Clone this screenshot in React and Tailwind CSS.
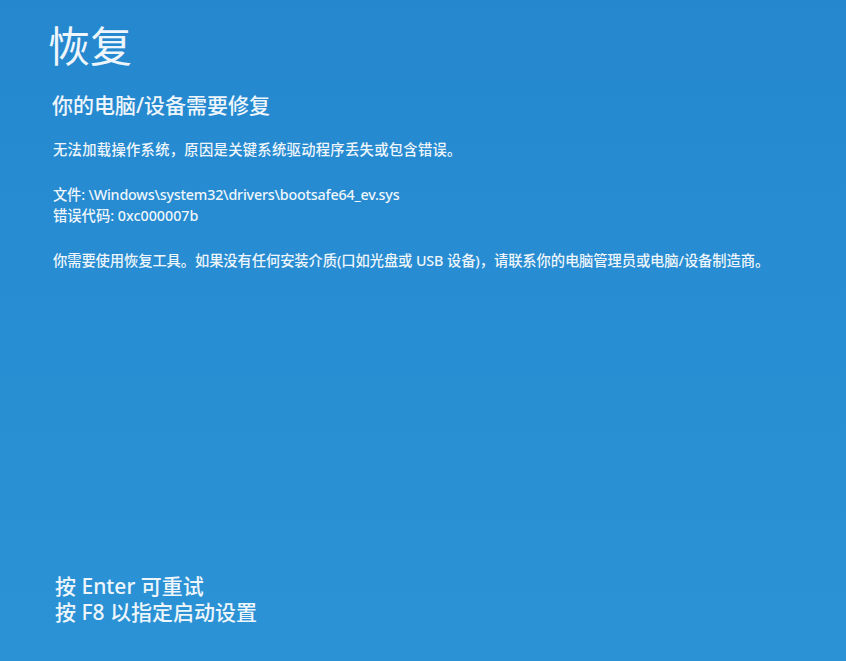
export default function App() {
  return (
    <div
      className="w-[846px] h-[661px] overflow-hidden bg-gradient-to-b from-[#2588cf] to-[#2b93d5] text-[#eef6fc] flex flex-col pl-[48px] pr-6 pt-[25px] pb-[36px]"
      style={{ fontFamily: '"Noto Sans", "Noto Sans CJK SC", sans-serif' }}
    >
      {/* 标题 */}
      <h1 className="text-[42px] leading-none font-normal">恢复</h1>
      <h2 className="mt-[28px] ml-[4px] text-[21px] leading-none font-medium">你的电脑/设备需要修复</h2>

      <div className="ml-[5px] text-[14.3px] leading-[21px] font-medium">
        <p className="mt-[23px] tracking-[0.3px]">无法加载操作系统，原因是关键系统驱动程序丢失或包含错误。</p>

        <p className="mt-[24px] tracking-[-0.2px]">文件: \Windows\system32\drivers\bootsafe64_ev.sys</p>
        <p>错误代码: 0xc000007b</p>

        <p className="mt-[24px] tracking-[-0.1px]">
          你需要使用恢复工具。如果没有任何安装介质(口如光盘或 USB 设备)，请联系你的电脑管理员或电脑/设备制造商。
        </p>
      </div>

      {/* 底部提示 */}
      <div className="mt-auto ml-[7px] text-[21px] leading-[26px] font-medium">
        <p>按 Enter 可重试</p>
        <p>按 F8 以指定启动设置</p>
      </div>
    </div>
  );
}
